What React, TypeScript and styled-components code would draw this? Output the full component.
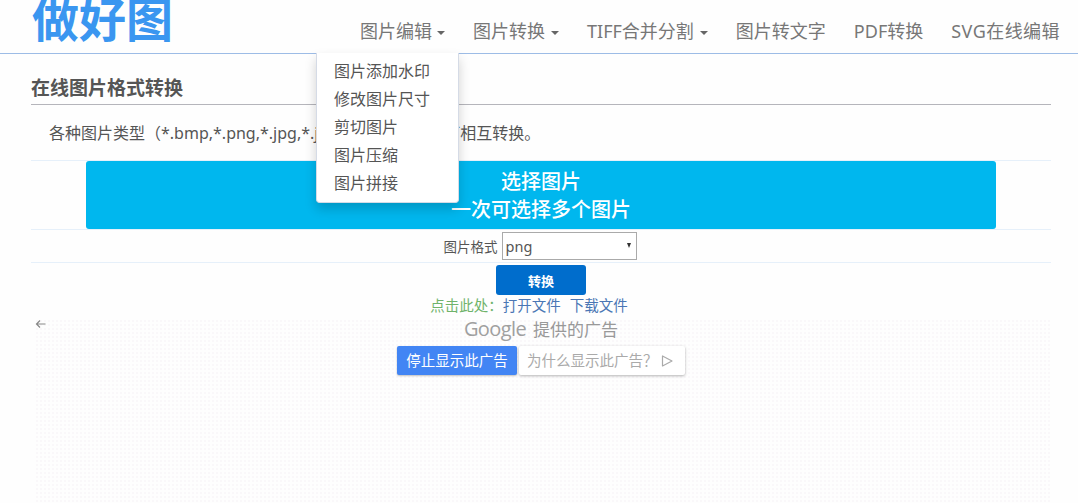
import React from 'react';
import styled, { createGlobalStyle } from 'styled-components';

const GlobalStyle = createGlobalStyle`
  html, body {
    margin: 0;
    padding: 0;
    height: 503px;
    overflow: hidden;
    background: #fefefe;
    font-family: "Noto Sans", "Noto Sans CJK SC", sans-serif;
  }
`;

const Page = styled.div`
  width: 1078px;
  height: 503px;
  overflow: hidden;
`;

const NavBar = styled.header`
  height: 53px;
  border-bottom: 1px solid #9dbce6;
  display: flex;
  justify-content: space-between;
  padding: 0 4px 0 32px;
`;

const Logo = styled.div`
  font-size: 47px;
  line-height: 46px;
  font-weight: 700;
  color: #3a96f0;
  margin-top: -4px;
  white-space: nowrap;
`;

const NavList = styled.nav`
  display: flex;
  padding-top: 18px;
`;

const NavItem = styled.div<{ $tracking?: number; $gap?: number }>`
  position: relative;
  height: 27px;
  padding: 0 14px;
  display: flex;
  align-items: center;
  gap: ${(p) => p.$gap ?? 6}px;
  font-size: 18px;
  line-height: 27px;
  color: #777;
  white-space: nowrap;
  letter-spacing: ${(p) => p.$tracking ?? 0}px;
`;

const Caret = styled.i`
  width: 0;
  height: 0;
  margin-top: 2px;
  border-left: 4px solid transparent;
  border-right: 4px solid transparent;
  border-top: 4px solid #666;
`;

const Menu = styled.div`
  position: absolute;
  z-index: 5;
  top: 35px;
  left: -30px;
  width: 143px;
  height: 150px;
  padding: 4px 0 0 17px;
  box-sizing: border-box;
  background: #fff;
  border-radius: 0 0 4px 4px;
  border: 1px solid #d5dbe6;
  border-top: none;
  box-shadow: 0 6px 12px rgba(0, 0, 0, 0.18);
`;

const MenuItem = styled.div`
  font-size: 16px;
  line-height: 28px;
  color: #555;
`;

const Content = styled.main`
  padding: 0 27px 0 31px;
`;

const Heading = styled.h2`
  margin: 0;
  height: 51px;
  box-sizing: border-box;
  padding-top: 20px;
  font-size: 19px;
  line-height: 28px;
  font-weight: 700;
  color: #555;
  border-bottom: 1px solid #b5b5bb;
`;

const Intro = styled.p`
  margin: 0;
  height: 56px;
  box-sizing: border-box;
  padding: 14px 0 0 18px;
  font-size: 16px;
  line-height: 28px;
  word-spacing: 2px;
  color: #555;
  border-bottom: 1px solid #e6f0fa;
  white-space: nowrap;
`;

const PickRow = styled.div`
  height: 68px;
  display: flex;
  justify-content: center;
  border-bottom: 1px solid #e6f0fa;
`;

const PickButton = styled.div`
  width: 910px;
  height: 68px;
  border-radius: 3px;
  background: #00b7ee;
  color: #fff;
  font-size: 20px;
  line-height: 28px;
  font-weight: 500;
  text-align: center;
  padding-top: 7px;
  box-sizing: border-box;
`;

const FormatRow = styled.div`
  height: 32px;
  display: flex;
  align-items: center;
  justify-content: center;
  gap: 4px;
  padding-right: 2px;
  font-size: 13.5px;
  color: #555;
  border-bottom: 1px solid #e6f0fa;
`;

const SelectWrap = styled.div`
  position: relative;
  display: flex;
`;

const FormatSelect = styled.select`
  appearance: none;
  width: 135px;
  height: 28px;
  padding: 0 0 0 3px;
  border: 1px solid #aaa;
  border-radius: 0;
  background: #fff;
  color: #555;
  font-family: "Noto Sans", sans-serif;
  font-size: 14.5px;
`;

const SelectArrow = styled.i`
  position: absolute;
  right: 6px;
  top: 11px;
  width: 0;
  height: 0;
  border-left: 2.5px solid transparent;
  border-right: 2.5px solid transparent;
  border-top: 5px solid #333;
  pointer-events: none;
`;

const ConvertRow = styled.div`
  display: flex;
  justify-content: center;
  padding-top: 2px;
`;

const ConvertButton = styled.button`
  width: 90px;
  height: 30px;
  border: none;
  border-radius: 3px;
  background: #006dcc;
  color: #fff;
  font-family: inherit;
  font-size: 13px;
  font-weight: 700;
`;

const LinkRow = styled.div`
  display: flex;
  justify-content: center;
  gap: 9px;
  height: 20px;
  padding-right: 24px;
  font-size: 14.5px;
  line-height: 20px;
  color: #6fb36a;
`;

const LinkLead = styled.span`
  margin-right: -9px;
`;

const FileLink = styled.a`
  color: #4a76b4;
`;

const AdArea = styled.section`
  position: relative;
  height: 190px;
  isolation: isolate;

  &::before {
    content: '';
    position: absolute;
    z-index: -1;
    inset: 4px 0 0 4px;
    background-image: radial-gradient(circle, #faf8fa 1px, transparent 1px);
    background-size: 4px 4px;
  }
`;

const BackArrow = styled.svg`
  position: absolute;
  left: 4px;
  top: 4px;
`;

const AdTitle = styled.div`
  display: flex;
  justify-content: center;
  align-items: center;
  gap: 7px;
  height: 26px;
  color: #999;
  font-size: 17px;
`;

const GoogleMark = styled.span`
  font-family: "Open Sans", sans-serif;
  font-size: 20px;
  letter-spacing: -0.6px;
  font-weight: 500;
  color: #a0a0a0;
`;

const AdButtons = styled.div`
  display: flex;
  justify-content: center;
  gap: 2px;
  margin-top: 5px;
`;

const StopButton = styled.div`
  width: 120px;
  height: 29px;
  border-radius: 2px;
  background: #4285f4;
  color: #fff;
  font-size: 14.5px;
  line-height: 29px;
  text-align: center;
  box-shadow: 0 1px 2px rgba(0, 0, 0, 0.25);
`;

const WhyButton = styled.div`
  width: 166px;
  height: 29px;
  box-sizing: border-box;
  padding-left: 8px;
  border-radius: 2px;
  background: #fff;
  color: #aaa;
  font-size: 14.5px;
  line-height: 29px;
  display: flex;
  align-items: center;
  gap: 3px;
  box-shadow: 0 1px 3px rgba(0, 0, 0, 0.3);
`;

const menuItems = ['图片添加水印', '修改图片尺寸', '剪切图片', '图片压缩', '图片拼接'];

const App: React.FC = () => {
  return (
    <Page>
      <GlobalStyle />
      <NavBar>
        <Logo>做好图</Logo>
        <NavList>
          <NavItem $gap={5}>
            图片编辑 <Caret />
            <Menu>
              {menuItems.map((item) => (
                <MenuItem key={item}>{item}</MenuItem>
              ))}
            </Menu>
          </NavItem>
          <NavItem>
            图片转换 <Caret />
          </NavItem>
          <NavItem>
            TIFF合并分割 <Caret />
          </NavItem>
          <NavItem>图片转文字</NavItem>
          <NavItem>PDF转换</NavItem>
          <NavItem $tracking={0.45}>SVG在线编辑</NavItem>
        </NavList>
      </NavBar>
      <Content>
        <Heading>在线图片格式转换</Heading>
        <Intro>各种图片类型（*.bmp,*.png,*.jpg,*.jpeg,*.gif, *.tiff）可相互转换。</Intro>
        <PickRow>
          <PickButton>
            选择图片
            <br />
            一次可选择多个图片
          </PickButton>
        </PickRow>
        <FormatRow>
          图片格式
          <SelectWrap>
            <FormatSelect defaultValue="png">
              <option value="png">png</option>
              <option value="jpg">jpg</option>
            </FormatSelect>
            <SelectArrow />
          </SelectWrap>
        </FormatRow>
        <ConvertRow>
          <ConvertButton>转换</ConvertButton>
        </ConvertRow>
        <LinkRow>
          <LinkLead>点击此处：</LinkLead>
          <FileLink>打开文件</FileLink>
          <FileLink>下载文件</FileLink>
        </LinkRow>
        <AdArea>
          <BackArrow width="11" height="10" viewBox="0 0 11 10" fill="none" stroke="#888" strokeWidth="1.2">
            <path d="M10.5 5H1.5M5 1.5L1.5 5L5 8.5" />
          </BackArrow>
          <AdTitle>
            <GoogleMark>Google</GoogleMark>
            提供的广告
          </AdTitle>
          <AdButtons>
            <StopButton>停止显示此广告</StopButton>
            <WhyButton>
              为什么显示此广告？
              <svg width="12" height="12" viewBox="0 0 12 12" fill="none" stroke="#aaa" strokeWidth="1.2" strokeLinejoin="round">
                <path d="M1.5 1V11L11 6Z" />
              </svg>
            </WhyButton>
          </AdButtons>
        </AdArea>
      </Content>
    </Page>
  );
};

export default App;
